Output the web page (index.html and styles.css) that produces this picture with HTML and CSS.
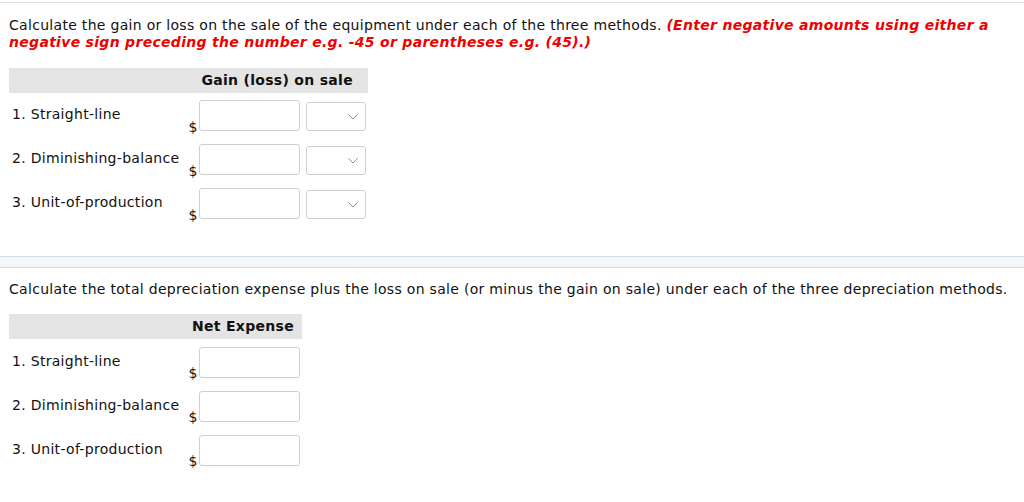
FILE: index.html
```html
<!DOCTYPE html>
<html>
<head>
<meta charset="utf-8">
<link rel="stylesheet" href="styles.css">
</head>
<body>
<div class="topline"></div>
<div class="section first">
  <p class="question">Calculate the gain or loss on the sale of the equipment under each of the three methods. <span class="hint">(Enter negative amounts using either a negative sign preceding the number e.g. -45 or parentheses e.g. (45).)</span></p>
  <div class="table t1">
    <div class="thead">Gain (loss) on sale</div>
    <div class="row">
      <div class="label">1. Straight-line</div>
      <div class="cur">$</div>
      <div class="field"></div>
      <div class="select"><svg width="10" height="6" viewBox="0 0 10 6"><path d="M0.5 0.5 L5 5 L9.5 0.5" fill="none" stroke="#8a8a8a" stroke-width="1"/></svg></div>
    </div>
    <div class="row">
      <div class="label">2. Diminishing-balance</div>
      <div class="cur">$</div>
      <div class="field"></div>
      <div class="select"><svg width="10" height="6" viewBox="0 0 10 6"><path d="M0.5 0.5 L5 5 L9.5 0.5" fill="none" stroke="#8a8a8a" stroke-width="1"/></svg></div>
    </div>
    <div class="row">
      <div class="label">3. Unit-of-production</div>
      <div class="cur">$</div>
      <div class="field"></div>
      <div class="select"><svg width="10" height="6" viewBox="0 0 10 6"><path d="M0.5 0.5 L5 5 L9.5 0.5" fill="none" stroke="#8a8a8a" stroke-width="1"/></svg></div>
    </div>
  </div>
</div>
<div class="band"></div>
<div class="section second">
  <p class="question">Calculate the total depreciation expense plus the loss on sale (or minus the gain on sale) under each of the three depreciation methods.</p>
  <div class="table t2">
    <div class="thead">Net Expense</div>
    <div class="row">
      <div class="label">1. Straight-line</div>
      <div class="cur">$</div>
      <div class="field"></div>
    </div>
    <div class="row">
      <div class="label">2. Diminishing-balance</div>
      <div class="cur">$</div>
      <div class="field"></div>
    </div>
    <div class="row">
      <div class="label">3. Unit-of-production</div>
      <div class="cur">$</div>
      <div class="field"></div>
    </div>
  </div>
</div>
</body>
</html>
```

FILE: styles.css
```css
html, body {
  margin: 0;
  padding: 0;
  background: #ffffff;
}
body {
  font-family: "DejaVu Sans", Verdana, sans-serif;
  font-size: 14px;
  line-height: 17px;
  letter-spacing: 0.3px;
  color: #111111;
}
.topline {
  margin-top: 2px;
  border-top: 1px solid #d6dee8;
}
.section {
  padding: 0 9px;
}
.question {
  margin: 0;
}
.first .question {
  padding-top: 14px;
}
.second .question {
  padding-top: 13px;
}
.hint {
  color: #f00000;
  font-weight: bold;
  font-style: italic;
}
.table {
  margin-top: 17px;
}
.t1 {
  width: 359px;
}
.t2 {
  width: 293px;
  margin-top: 16px;
}
.thead {
  background: #e4e4e4;
  font-weight: bold;
  line-height: 25px;
  height: 25px;
  text-align: right;
}
.t1 .thead {
  padding-right: 15px;
}
.t2 .thead {
  padding-right: 8px;
}
.row {
  display: flex;
  align-items: flex-start;
  height: 44px;
  padding-top: 7px;
  box-sizing: border-box;
}
.t2 .row {
  padding-top: 8px;
}
.label {
  width: 175px;
  padding-left: 3px;
  margin-top: 6px;
  white-space: nowrap;
}
.cur {
  width: 12px;
  align-self: flex-end;
  margin-bottom: 1px;
  text-align: center;
  letter-spacing: 0;
}
.field {
  width: 101px;
  height: 31px;
  box-sizing: border-box;
  border: 1px solid #cfcfcf;
  border-radius: 3px;
  background: #fff;
}
.select {
  width: 60px;
  height: 29px;
  margin-left: 6px;
  margin-top: 2px;
  box-sizing: border-box;
  border: 1px solid #cfcfcf;
  border-radius: 3px;
  background: #fff;
  display: flex;
  align-items: center;
  justify-content: flex-end;
  padding-right: 7px;
}
.select svg {
  display: block;
}
.band {
  margin-top: 31px;
  height: 10px;
  border-top: 1px solid #d2dae4;
  border-bottom: 1px solid #d2dae4;
  background: #f5f7fa;
}
```
